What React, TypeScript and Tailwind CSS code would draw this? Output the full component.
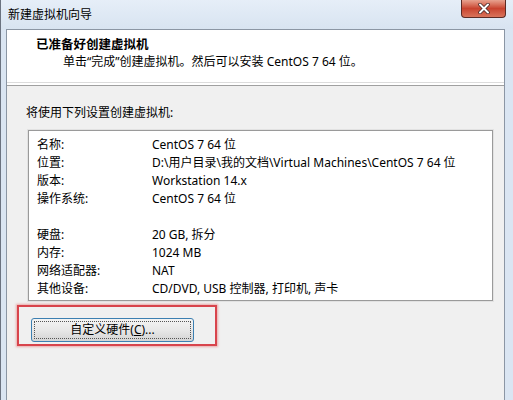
import React from "react";

const rows: [string, string][] = [
  ["名称:", "CentOS 7 64 位"],
  ["位置:", "D:\\用户目录\\我的文档\\Virtual Machines\\CentOS 7 64 位"],
  ["版本:", "Workstation 14.x"],
  ["操作系统:", "CentOS 7 64 位"],
  ["", ""],
  ["硬盘:", "20 GB, 拆分"],
  ["内存:", "1024 MB"],
  ["网络适配器:", "NAT"],
  ["其他设备:", "CD/DVD, USB 控制器, 打印机, 声卡"],
];

export default function App() {
  return (
    <div
      className="w-[513px] h-[400px] overflow-hidden bg-[#dae5f2] border-l border-[#6b7380] flex flex-col text-[#1a1a1a]"
      style={{ fontFamily: '"Noto Sans", "Noto Sans CJK SC", sans-serif' }}
    >
      {/* title bar */}
      <div className="h-[29px] shrink-0 flex items-start justify-between pl-[7px] pr-[7px] bg-gradient-to-b from-[#e6eef8] to-[#d8e4f1]">
        <span className="mt-[7px] text-[12px] leading-[16px] text-black">新建虚拟机向导</span>
        <div className="w-[45px] h-[18px] rounded-b-[4px] border border-t-0 border-[#5c2b24] bg-gradient-to-b from-[#e7a28f] via-[#c8432f] to-[#d9735a] flex items-center justify-center">
          <svg width="12" height="11" viewBox="0 0 12 11">
            <path d="M2 1.5 L10 9.5 M10 1.5 L2 9.5" stroke="#3a2020" strokeWidth="3.4" strokeLinecap="round" />
            <path d="M2 1.5 L10 9.5 M10 1.5 L2 9.5" stroke="#ffffff" strokeWidth="2" strokeLinecap="round" />
          </svg>
        </div>
      </div>

      {/* client area */}
      <div className="flex-1 ml-[5px] w-[499px] border border-b-0 border-[#8b96a4] bg-[#f0f0f0] flex flex-col">
        {/* header */}
        <div className="h-[53px] bg-white border-b border-[#dcdcdc] pl-[29px] pt-[7px]">
          <div className="text-[12.5px] leading-[16px] font-bold text-black">已准备好创建虚拟机</div>
          <div className="pl-[27px] mt-[1px] text-[12px] leading-[16px] text-black">
            单击“完成”创建虚拟机。然后可以安装 CentOS 7 64 位。
          </div>
        </div>
        <div className="h-[2px] bg-white" />
        <div className="h-[1px] bg-[#a0a0a0]" />

        {/* body */}
        <div className="flex flex-col pt-[19px]">
          <div className="pl-[19px] text-[12px] leading-[16px] text-black">将使用下列设置创建虚拟机:</div>
          <div className="ml-[21px] mt-[9px] w-[465px] h-[171px] bg-white border border-[#9a9a9a] shadow-[0_0_0_1px_#e2e2e2] pl-[8px] pt-[5px]">
            {rows.map(([k, v], i) => (
              <div key={i} className="flex h-[18px] text-[12px] leading-[18px] text-black whitespace-nowrap">
                <span className="w-[115px] shrink-0">{k}</span>
                <span>{v}</span>
              </div>
            ))}
          </div>

          {/* highlighted button */}
          <div className="ml-[10px] mt-[4px] w-[200px] h-[41px] border-[2px] border-[#d8444c] shadow-[0_0_2px_1px_rgba(230,120,120,0.6)] pl-[12px] pt-[9px]">
            <button className="w-[163px] h-[24px] rounded-[3px] border border-[#3c7fb1] bg-gradient-to-b from-[#f4f4f4] via-[#e8e8e8] to-[#d4d4d4] p-[2px]">
              <div className="w-full h-full border border-dotted border-[#555] flex items-center justify-center text-[12px] leading-[16px] text-black">
                自定义硬件(<span className="underline">C</span>)...
              </div>
            </button>
          </div>
        </div>
      </div>
    </div>
  );
}
